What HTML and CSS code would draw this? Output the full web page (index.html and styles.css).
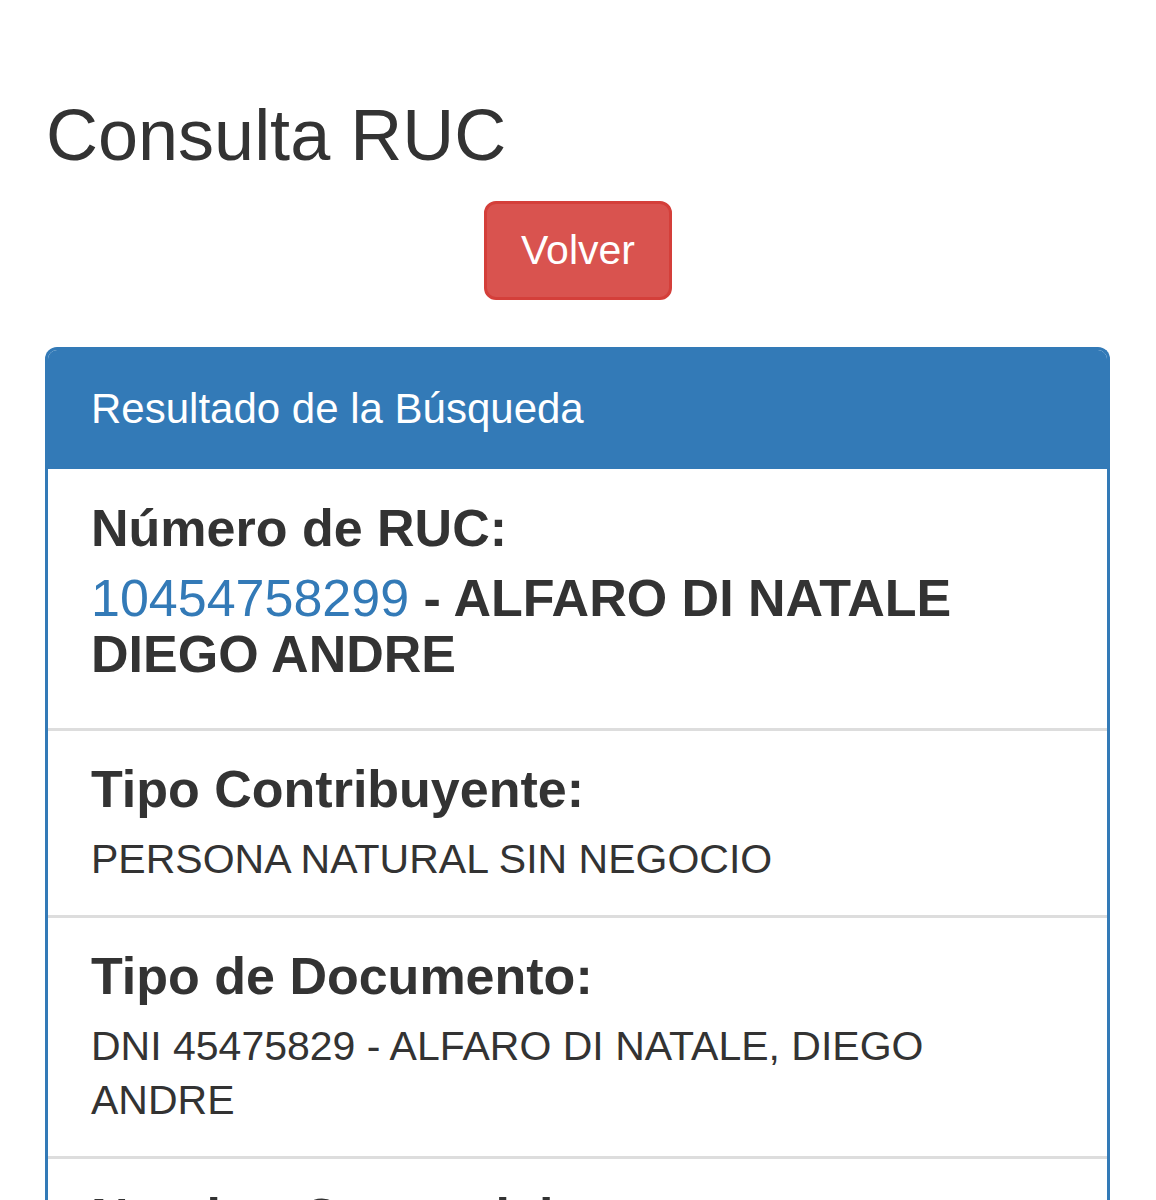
FILE: index.html
```html
<!DOCTYPE html>
<html lang="es">
<head>
<meta charset="utf-8">
<title>Consulta RUC</title>
<link rel="stylesheet" href="styles.css">
</head>
<body>
<div class="container">
  <h1 class="title">Consulta RUC</h1>
  <div class="actions">
    <a class="btn-danger" href="#">Volver</a>
  </div>
  <div class="panel">
    <div class="panel-heading">Resultado de la Búsqueda</div>
    <div class="list">
      <div class="item item-first">
        <h4 class="label">Número de RUC:</h4>
        <h4 class="value-strong"><a class="link" href="#">10454758299</a> - ALFARO DI NATALE DIEGO ANDRE</h4>
      </div>
      <div class="item">
        <h4 class="label">Tipo Contribuyente:</h4>
        <p class="value">PERSONA NATURAL SIN NEGOCIO</p>
      </div>
      <div class="item">
        <h4 class="label">Tipo de Documento:</h4>
        <p class="value">DNI 45475829 - ALFARO DI NATALE, DIEGO ANDRE</p>
      </div>
      <div class="item">
        <h4 class="label">Nombre Comercial:</h4>
        <p class="value">-</p>
      </div>
      <div class="item">
        <h4 class="label">Fecha de Inscripción:</h4>
        <p class="value">-</p>
      </div>
    </div>
  </div>
</div>
</body>
</html>
```
FILE: styles.css
```css
* { box-sizing: border-box; }
html, body { margin: 0; padding: 0; background: #fff; }
body {
  font-family: "Liberation Sans", Arial, sans-serif;
  color: #333;
}
.container {
  padding: 96px 46px 0 45px;
}
.title {
  margin: 0;
  font-size: 72px;
  line-height: 79px;
  font-weight: normal;
  color: #333;
  padding-left: 1px;
}
.actions {
  display: flex;
  justify-content: center;
  margin-top: 26px;
  margin-left: -45px;
  margin-right: -46px;
}
.btn-danger {
  display: flex;
  align-items: center;
  justify-content: center;
  width: 188px;
  height: 99px;
  background: #d9534f;
  border: 3px solid #d43f3a;
  border-radius: 12px;
  color: #fff;
  font-size: 41px;
  text-decoration: none;
}
.panel {
  margin-top: 47px;
  border: 3px solid #337ab7;
  border-radius: 12px 12px 0 0;
  border-bottom: none;
}
.panel-heading {
  background: #337ab7;
  color: #fff;
  font-size: 42px;
  line-height: 46px;
  padding: 36px 42px 37px 43px;
  border-radius: 9px 9px 0 0;
}
.item {
  padding: 30px 60px 29px 43px;
  border-top: 3px solid #ddd;
}
.item-first {
  border-top: none;
  padding-top: 31px;
  padding-bottom: 30px;
}
.label {
  margin: 0 0 14px;
  font-size: 52px;
  line-height: 57px;
  font-weight: bold;
  color: #333;
}
.item-first .label { margin-bottom: 13px; }
.value-strong {
  margin: 0 0 16px;
  font-size: 52px;
  line-height: 56px;
  font-weight: bold;
  color: #333;
}
.link { color: #337ab7; text-decoration: none; font-weight: normal; }
.value {
  margin: 0;
  font-size: 41px;
  line-height: 54px;
  color: #333;
}
```
